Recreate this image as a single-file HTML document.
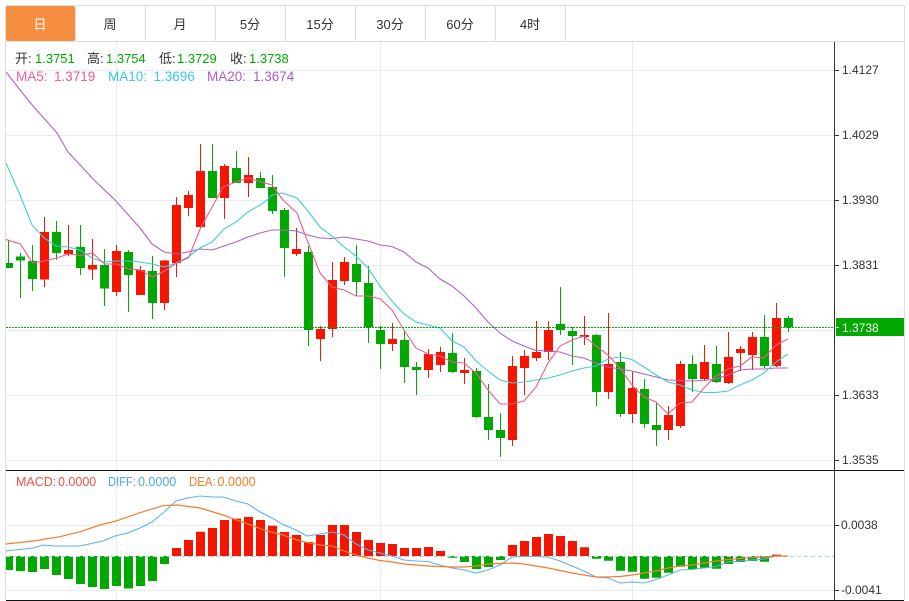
<!DOCTYPE html>
<html lang="zh">
<head>
<meta charset="utf-8">
<title>K线图</title>
<style>
html,body{margin:0;padding:0;background:#fff;width:909px;height:601px;overflow:hidden}
svg{display:block;position:absolute;left:0;top:0}
text{font-family:"Liberation Sans","Noto Sans CJK SC",sans-serif;font-size:13px}
</style>
</head>
<body>
<svg width="909" height="601" viewBox="0 0 909 601" xmlns="http://www.w3.org/2000/svg">
<defs><clipPath id="c"><rect x="6" y="42" width="828" height="558"/></clipPath></defs>
<rect width="909" height="601" fill="#fff"/>
<!-- grid -->
<path d="M6 70.5H834M6 135.5H834M6 200.5H834M6 265.5H834M6 330.5H834M6 395.5H834M6 460.5H834M6 525.5H834M6 590.5H834M116.5 42V600M380.5 42V600M632.5 42V600" stroke="#e3edf3" stroke-width="1" fill="none"/>
<!-- frame -->
<path d="M5.5 5.5H904.5V600M5.5 5.5V600M5.5 41.5H904.5M75.5 6V41M145.5 6V41M215.5 6V41M285.5 6V41M355.5 6V41M425.5 6V41M495.5 6V41M565.5 6V41" stroke="#dddddd" stroke-width="1" fill="none"/>
<rect x="6" y="6" width="69" height="35" rx="2" fill="#f68e42"/>
<g text-anchor="middle" fill="#333">
<text x="40" y="29" fill="#fff">日</text>
<text x="110" y="29">周</text>
<text x="180" y="29">月</text>
<text x="250" y="29">5分</text>
<text x="320" y="29">15分</text>
<text x="390" y="29">30分</text>
<text x="460" y="29">60分</text>
<text x="530" y="29">4时</text>
</g>
<!-- lower panel borders and axis -->
<path d="M6 470.5H904M6 600.5H904" stroke="#111" stroke-width="1" fill="none"/>
<path d="M834.5 42V600" stroke="#333" stroke-width="1" fill="none"/>
<path d="M835 70.5H839M835 135.5H839M835 200.5H839M835 265.5H839M835 327.5H839M835 395.5H839M835 460.5H839M835 525.5H839M835 590.5H839" stroke="#333" stroke-width="1" fill="none"/>
<!-- price candles -->
<g clip-path="url(#c)" fill="none">
<path stroke="#00a800" stroke-width="1" d="M8.5 240V268M20.5 253V298M32.5 245V291M56.5 221V260M80.5 225V275M104.5 249V306M128.5 250V312M152.5 256V319M212.5 144V198M236.5 151V183M260.5 172V188M272.5 175V214M284.5 208V277M308.5 246V346M356.5 245V296M368.5 266V343M380.5 326V369M404.5 330V383M416.5 362V395M452.5 333V373M476.5 368V418M488.5 384V440M500.5 413V457M560.5 287V335M572.5 327V365M596.5 334V406M620.5 352V417M644.5 379V428M656.5 402V446M692.5 355V392M716.5 346V383M764.5 315V368M788.5 316V332"/>
<path stroke="#f41600" stroke-width="1" d="M44.5 217V287M68.5 225V256M92.5 239V280M116.5 245V296M140.5 266V295M164.5 260V310M176.5 197V277M188.5 191V216M200.5 144V228M224.5 164V219M248.5 157V197M296.5 228V256M320.5 326V361M332.5 262V337M344.5 257V285M392.5 323V351M428.5 349V378M440.5 347V372M464.5 358V384M512.5 356V446M524.5 350V395M536.5 321V361M548.5 321V360M584.5 316V345M608.5 313V399M632.5 372V423M668.5 406V440M680.5 361V428M704.5 345V381M728.5 332V384M740.5 346V371M752.5 332V370M776.5 303V367"/>
<path stroke="#00a800" stroke-width="9" d="M8.5 263V268M20.5 256.5V260.5M32.5 261V279M56.5 232V253M80.5 247V268M104.5 265V288.5M128.5 252V275M152.5 271V303M212.5 171V198M236.5 168V183M260.5 178V188M272.5 187V211M284.5 210V248M308.5 252V330M356.5 264V282M368.5 283V327M380.5 330V344M404.5 340V367M416.5 367V370M452.5 353V372M476.5 371V417M488.5 417V430M500.5 430V438M560.5 324V330M572.5 331V336M596.5 335V392M620.5 362V414M644.5 389V424M656.5 425V430M692.5 364V379M716.5 364V382M764.5 337V366M788.5 318V327"/>
<path stroke="#f41600" stroke-width="9" d="M44.5 232V279.5M68.5 250V254M92.5 265V269.5M116.5 251V292M140.5 270V295M164.5 260.5V303M176.5 205V263M188.5 195V208M200.5 171V227M224.5 166V198M248.5 175V183M296.5 249V254M320.5 329V339M332.5 280V329M344.5 262V281M392.5 339V344M428.5 354V370M440.5 352V365M464.5 370V373M512.5 366V440M524.5 356V368M536.5 352V358M548.5 330V352M584.5 335V337M608.5 364V392M632.5 388V414M668.5 415V430M680.5 364V426M704.5 362V379M728.5 357V383M740.5 349V353M752.5 337V355M776.5 318V366"/>
<!-- MA20 -->
<path stroke="#b25fcb" stroke-width="1.1" d="M6 72L20 90L33 106L57 133L68 152L82 167L93 179L115 200L140 228L152 244L164 252L176 254L188 252L200 249L212 250L224 246L236 242L248 237L260 233L272 230L284 230L296 231L308 235L320 238L332 238.5L344 237L356 239L368 241L380 245L392 246.5L404 252L416 262L428 268L440 279L452 286L464 296L476 308L488 322L500 333L512 341L524 346L536 350.5L548 351L560 352L572 356L584 358L596 363L608 367L620 369L632 371L644 374L656 377L668 380L680 380.5L692 381L704 380.5L716 379L728 375L740 370L752 369L764 369L776 368L788 368"/>
<!-- MA10 -->
<path stroke="#43cbe0" stroke-width="1.1" d="M6 163L20 195L32 225L44 238L56 246L68 247L80 250L92 258L104 262L116 261L128 261L140 262L152 264L164 267L176 263L188 257L200 248L212 242L224 229L236 222L248 212L260 205L267 200L272 195L282 193L297 198L307 210L320 227L332 236L344 247L356 256L368 268L380 286L392 301L404 314L416 322L428 325L440 328L452 341L464 347L476 361L488 371L500 380L512 383L524 382L536 380L548 378L560 375L572 371L584 368L596 366L608 359L620 357L632 359.5L644 367L656 375L668 382L680 385L692 390L704 392.5L716 392.5L728 391L740 385L752 380L764 373L776 362L788 354"/>
<!-- MA5 -->
<path stroke="#ee5c92" stroke-width="1.1" d="M6 239.5L20.5 244L32.5 263L44.5 261L56.5 258L68.5 254L80.5 255.5L92.5 253L104.5 264L116.5 264L128.5 269L140.5 270L152.5 277L164.5 271L176.5 263L188.5 258L200.5 228L216 200L223 187L236 182L248 178L258 181L272 185L283 200L297 213L304 232L320 273L332 287L344 290L356 296L368 296L380 298.7L392 310L404 330L416 348L428 354L440 356L452 362L464 363L476 373L488 390L500 404L512 404L524 401L536 387L548 363L560 346L572 340L584 336L596 346L608 355L620 368L632 385L644 397L656 402L668 414L680 403L692 402L704 388L716 376L728 369L740 366L752 357L764 358L776 345L788 339"/>
<!-- MACD bars -->
<path stroke="#00a800" stroke-width="9" d="M8.5 556V570M20.5 556V571M32.5 556V572M44.5 556V569M56.5 556V575M68.5 556V579M80.5 556V584M92.5 556V587M104.5 556V589M116.5 556V586M128.5 556V588.5M140.5 556V586M152.5 556V581M164.5 556V564M452.5 556V557.7M464.5 556V562M476.5 556V569M488.5 556V567M500.5 556V560M596.5 556V558.7M608.5 556V560.7M620.5 556V570.7M632.5 556V571.7M644.5 556V578.7M656.5 556V577.7M668.5 556V572.7M680.5 556V566.7M692.5 556V569.3M704.5 556V567.7M716.5 556V568.7M728.5 556V564M740.5 556V562M752.5 556V561M764.5 556V561.7"/>
<path stroke="#f41600" stroke-width="9" d="M176.5 556V548M188.5 556V540M200.5 556V531.7M212.5 556V528M224.5 556V520M236.5 556V518.6M248.5 556V517M260.5 556V520M272.5 556V525.7M284.5 556V532M296.5 556V535M308.5 556V542M320.5 556V535M332.5 556V525M344.5 556V525M356.5 556V532M368.5 556V540M380.5 556V543M392.5 556V544M404.5 556V548M416.5 556V548M428.5 556V547M440.5 556V551"/>
<path stroke="#f41600" stroke-width="9" d="M512.5 556V545M524.5 556V541M536.5 556V537M548.5 556V534M560.5 556V536M572.5 556V541M584.5 556V547.3"/>
<path stroke="#f41600" stroke-width="9" d="M776.5 556V554.7"/>
<path stroke="#a9d5ea" stroke-width="1" stroke-dasharray="4 3" d="M6 556.5H834"/>
<!-- DIFF -->
<path stroke="#5fb0f2" stroke-width="1.1" d="M6 551L33 548L43 545L55 546L80 546L103 541L115 536L128 533L140 528L152 522L164 512L176 501L188 498L200 496L212 497L223 497L236 501L248 504L260 512L272 518L284 525L296 530L307 536L320 534L332 532L344 535L356 544L368 550L380 553L392 556L404 560L416 561L428 561.5L440 565L452 568L464 570L476 573L488 570L500 565L512 557L524 556.5L536 556.5L548 557L560 561L572 566L584 571L596 577L608 578L620 583L632 582L644 583L656 579.5L668 575L680 570L692 569.5L704 568L716 566.5L728 562L740 561L752 560L764 559L776 556L788 556"/>
<!-- DEA -->
<path stroke="#f47c2c" stroke-width="1.2" d="M6 544L33 541L60 536.7L80 531.7L100 525L117 520.7L140 512.7L163 505.7L177 505L200 508L223 515L233 518.7L248 524L267 531L283 535L300 541L320 545L332 546L344 551L356 555L368 558L380 560.5L392 562L404 564L416 565L428 566L440 566.5L452 567L464 567L476 566L488 564L500 563.5L512 563L524 564L536 566L548 568L560 570.5L572 573L584 575L596 577L608 577L620 576.5L632 575L644 573L656 571L668 568L680 566L692 565L704 563L716 561L728 559.5L740 558.5L752 557.5L764 557L776 556L788 556"/>
<path stroke="#00a800" stroke-width="1" stroke-dasharray="2 1" d="M6 327.5H834"/>
</g>
<!-- price tag -->
<rect x="836" y="318" width="68" height="18" fill="#00a800"/>
<path d="M835 327.5H839" stroke="#fff" stroke-width="1"/>
<text x="842" y="332" fill="#fff" style="font-size:12px">1.3738</text>
<!-- axis labels -->
<g fill="#333">
<text x="842" y="74" style="font-size:12px">1.4127</text>
<text x="842" y="139" style="font-size:12px">1.4029</text>
<text x="842" y="204" style="font-size:12px">1.3930</text>
<text x="842" y="269" style="font-size:12px">1.3831</text>
<text x="842" y="399" style="font-size:12px">1.3633</text>
<text x="842" y="464" style="font-size:12px">1.3535</text>
<text x="841" y="529" style="font-size:12px">0.0038</text>
<text x="841" y="594" style="font-size:12px">-0.0041</text>
</g>
<!-- legends -->
<g>
<text x="15" y="63" fill="#333">开:</text><text x="35" y="63" fill="#00a800">1.3751</text>
<text x="87" y="63" fill="#333">高:</text><text x="106" y="63" fill="#00a800">1.3754</text>
<text x="159" y="63" fill="#333">低:</text><text x="177" y="63" fill="#00a800">1.3729</text>
<text x="230" y="63" fill="#333">收:</text><text x="249" y="63" fill="#00a800">1.3738</text>
<text x="16" y="81" fill="#ee5c92" style="font-size:13.5px">MA5:</text><text x="54" y="81" fill="#ee5c92" style="font-size:13.5px">1.3719</text>
<text x="108" y="81" fill="#3cc8e0" style="font-size:13.5px">MA10:</text><text x="153.5" y="81" fill="#3cc8e0" style="font-size:13.5px">1.3696</text>
<text x="207" y="81" fill="#ab5cc8" style="font-size:13.5px">MA20:</text><text x="253" y="81" fill="#ab5cc8" style="font-size:13.5px">1.3674</text>
<text x="16" y="486" fill="#f0504a" style="font-size:12.5px">MACD:</text><text x="58" y="486" fill="#f0504a" style="font-size:12.5px">0.0000</text>
<text x="108" y="486" fill="#4ca6ee" style="font-size:12.5px" textLength="28" lengthAdjust="spacingAndGlyphs">DIFF:</text><text x="138" y="486" fill="#4ca6ee" style="font-size:12.5px">0.0000</text>
<text x="189" y="486" fill="#f47c2c" style="font-size:12.5px" textLength="26.5" lengthAdjust="spacingAndGlyphs">DEA:</text><text x="217.5" y="486" fill="#f47c2c" style="font-size:12.5px">0.0000</text>
</g>
</svg>
</body>
</html>
